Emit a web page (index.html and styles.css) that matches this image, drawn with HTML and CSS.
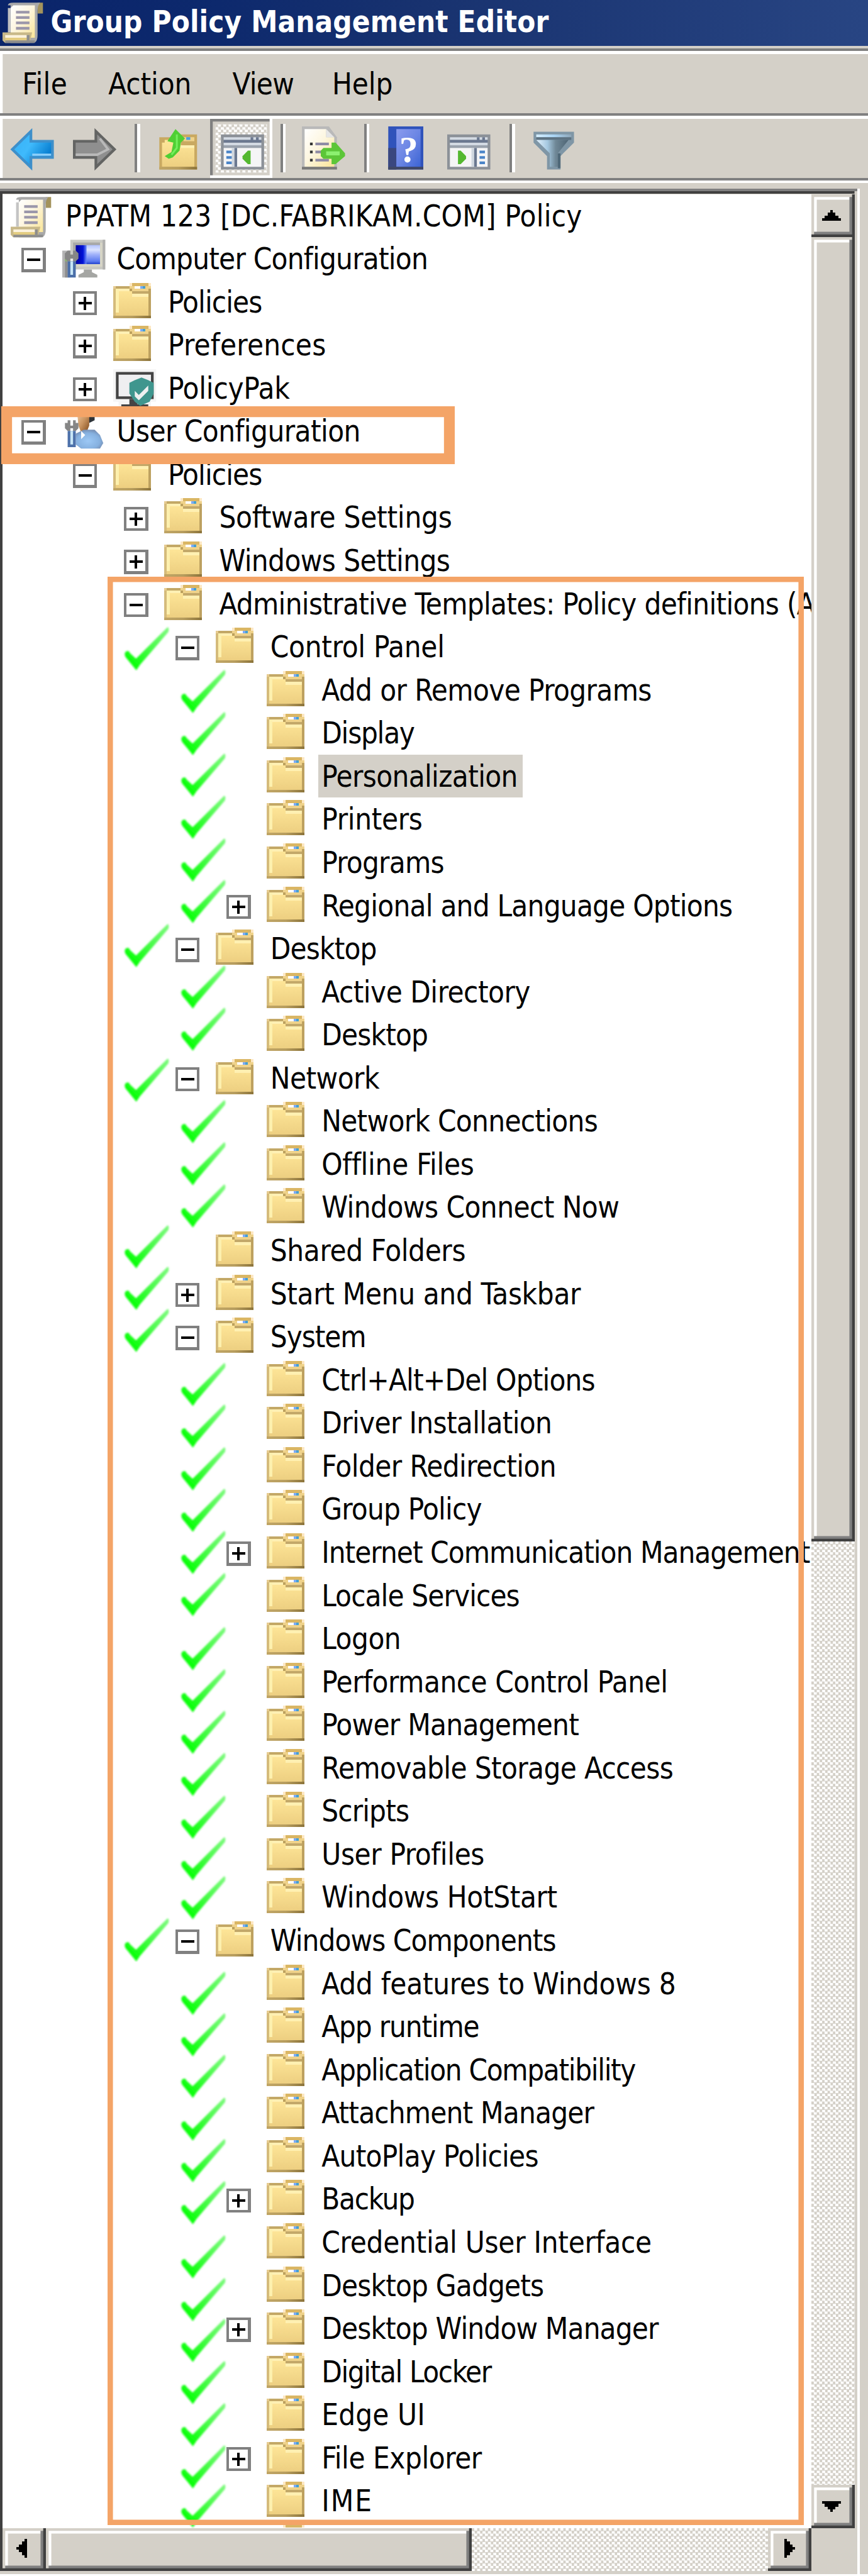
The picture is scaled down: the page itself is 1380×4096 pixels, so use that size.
FILE: index.html
```html
<!DOCTYPE html>
<html lang="en">
<head>
<meta charset="utf-8">
<title>Group Policy Management Editor</title>
<link rel="stylesheet" href="styles.css">
</head>
<body>
<svg class="defs" aria-hidden="true">
  <defs>
    <linearGradient id="g-folder" x1="0" y1="0" x2="0" y2="1"><stop offset="0" stop-color="#ffe799"/><stop offset="1" stop-color="#edcf81"/></linearGradient>
    <linearGradient id="g-foot" x1="0" y1="0" x2="1" y2="0"><stop offset="0" stop-color="#c0a565"/><stop offset=".5" stop-color="#b79d5e"/><stop offset="1" stop-color="#8b733a"/></linearGradient>
    <linearGradient id="g-paper" x1="0" y1="0" x2="1" y2="1"><stop offset="0" stop-color="#ffffff"/><stop offset=".45" stop-color="#fdf6e0"/><stop offset="1" stop-color="#fae596"/></linearGradient>
    <linearGradient id="g-blue" x1="0" y1="0" x2="1" y2=".6"><stop offset="0" stop-color="#37b0f5"/><stop offset=".5" stop-color="#3fbafc"/><stop offset="1" stop-color="#0077cc"/></linearGradient>
    <linearGradient id="g-screen" x1="0" y1="0" x2="1" y2="0"><stop offset="0" stop-color="#0000a0"/><stop offset=".3" stop-color="#0012d8"/><stop offset=".42" stop-color="#5a78f4"/><stop offset="1" stop-color="#7f9cf8"/></linearGradient>
    <linearGradient id="g-shade" x1="0" y1="0" x2="0" y2="1"><stop offset="0" stop-color="#b4c4ff"/><stop offset=".25" stop-color="#dbe3ff"/><stop offset=".5" stop-color="#9fb0fa"/><stop offset=".85" stop-color="#5b7af0"/><stop offset="1" stop-color="#2040cc"/></linearGradient>
    <linearGradient id="g-help" x1="0" y1="0" x2="1" y2="1"><stop offset="0" stop-color="#8a9bee"/><stop offset=".5" stop-color="#6c86e4"/><stop offset="1" stop-color="#3c64d4"/></linearGradient>
    <linearGradient id="g-cone" x1="0" y1="0" x2="1" y2="0"><stop offset="0" stop-color="#e2f1fc"/><stop offset=".35" stop-color="#a5c8e0"/><stop offset=".6" stop-color="#6f8796"/><stop offset="1" stop-color="#4d6474"/></linearGradient>
    <linearGradient id="g-rim" x1="0" y1="0" x2="1" y2="0"><stop offset="0" stop-color="#d5eefe"/><stop offset=".5" stop-color="#abd5f5"/><stop offset="1" stop-color="#8ea6b8"/></linearGradient>
    <linearGradient id="g-check" x1="1" y1="0" x2="0" y2="1"><stop offset="0" stop-color="#80fa80"/><stop offset=".45" stop-color="#48fb48"/><stop offset=".8" stop-color="#10ff10"/></linearGradient>
    <linearGradient id="g-face" x1="0" y1="0" x2="1" y2="1"><stop offset="0" stop-color="#efc79d"/><stop offset=".5" stop-color="#c8935f"/><stop offset="1" stop-color="#7f4a1b"/></linearGradient>
    <radialGradient id="g-body" cx=".45" cy=".6" r=".6"><stop offset="0" stop-color="#9cc8f5"/><stop offset=".7" stop-color="#86b1e0"/><stop offset="1" stop-color="#7790b5"/></radialGradient>
    <filter id="soft" x="-20%" y="-20%" width="140%" height="140%"><feGaussianBlur stdDeviation=".38"/></filter>
  </defs>

  <symbol id="folder" viewBox="0 0 16 16">
    <g shape-rendering="crispEdges">
      <rect x="0" y="2" width="14" height="12" fill="#e6cb90"/>
      <rect x="1" y="2" width="5" height="1" fill="#c3a866"/>
      <rect x="0" y="3" width="1" height="10" fill="#d5bb7b"/>
      <rect x="1" y="3" width="12" height="10" fill="url(#g-folder)"/>
      <rect x="1" y="3" width="5" height="1" fill="#fff0b4"/><rect x="1" y="3" width="1" height="9" fill="#fdf0ae"/>
      <rect x="6" y="1" width="8" height="3" fill="#efd28a"/>
      <rect x="7" y="1" width="6" height="1" fill="#dab664"/><rect x="6" y="1" width="1" height="1" fill="#fde8c4"/><rect x="13" y="1" width="1" height="1" fill="#fde8c4"/>
      <rect x="8" y="2" width="2" height="1" fill="#fff"/><rect x="10" y="2" width="1" height="1" fill="#7aabff"/><rect x="11" y="2" width="1" height="1" fill="#46a0cf"/>
      <rect x="6" y="3" width="1" height="1" fill="#bda15e"/><rect x="7" y="4" width="6" height="1" fill="#c3a869"/><rect x="7" y="5" width="6" height="1" fill="#fff0b2"/>
      <rect x="13" y="3" width="1" height="10" fill="#bda160"/>
      <rect x="0" y="13" width="14" height="1" fill="url(#g-foot)"/>
    </g>
  </symbol>

  <symbol id="scroll" viewBox="0 0 16 16">
    <path d="M13 1h2v4h-2z" fill="#a3935c"/>
    <path d="M2 2Q2 1 4 1h10q-1 1-1 3v9q0 3-2 3H3V2z" fill="#a9a9a9"/>
    <path d="M3 3l1-1h8v12H3z" fill="url(#g-paper)"/>
    <path d="M2 3h1v9H2z" fill="#c4c4c4"/>
    <path d="M5 4h5v1H5zM5 6h5v1H5zM5 8h5v1H5zM5 10h5v1H5z" fill="#9b97aa"/>
    <path d="M0 12h11l-1 4H1l-1-1z" fill="#c8b888"/>
    <path d="M1 13h8v1H1z" fill="#fbf2dc"/><path d="M1 14h8v1H1z" fill="#e3cc80"/>
    <path d="M1 15h11v1H1z" fill="#8d8d8d"/><path d="M9 13h1v2H9z" fill="#8d8d8d"/>
  </symbol>

  <symbol id="computer" viewBox="0 0 16 16">
    <rect x="3" y="1" width="13" height="11" fill="#c9c9c3"/>
    <rect x="4" y="2" width="11" height="9" fill="#a9a9a7"/><path d="M14 2h1v9H5v-1h9z" fill="#d6d5c6"/>
    <rect x="5" y="3" width="9" height="7" fill="url(#g-screen)"/><rect x="9" y="3" width="5" height="7" fill="url(#g-shade)"/>
    <path d="M15 1h1v11h-1z" fill="#b0b0ae"/>
    <path d="M8 12h3v1l2 1v1H6v-1l2-1z" fill="#a5a6a3"/>
    <path d="M0 5h3v10H0z" fill="#b4b4b4"/><path d="M1 6h1v9H1z" fill="#8e8e8e"/><path d="M1 8h1v1H1z" fill="#8db870"/>
    <path d="M2 5h1v1.500h1V5h1l1 1v2L5 9H2L1 8V6z" fill="#868686"/><path d="M3 8h1v1H3z" fill="#eee"/>
    <path d="M2 9h3v6H2z" fill="#4a6ea8"/><path d="M3 9h1v5H3z" fill="#c8e6f6"/>
  </symbol>

  <symbol id="policypak" viewBox="0 0 16 16">
    <path d="M0 1h16v12h-2v3H2v-3H0z" fill="#f5f5f5"/>
    <path d="M1 2h14v10H1z" fill="#444"/><path d="M2 3h12v8H2z" fill="#efeff1"/>
    <path d="M6 12h3v2h4v1H3v-1h3z" fill="#444"/>
    <path d="M6 6l2-1 2.500-1L13 5l2 1v4l-1.500 3-3.500 1.500L8 13 6 10z" fill="#3f968e"/>
    <path d="M8 9l1.500 1.500L13 7v2l-3.500 3.500L8 11z" fill="#eef0f0"/>
  </symbol>

  <symbol id="user" viewBox="0 0 16 16">
    <path d="M9 1h3v3l-2 1z" fill="#2e3338"/>
    <path d="M5.500 1H10v5L9 8.500H7L6 6z" fill="url(#g-face)"/>
    <path d="M5 9l3-1.500 4 0 2 2 1.200 3L14 14.500H7L5 13z" fill="url(#g-body)"/><path d="M7 8l1.500 1.500L7 11z" fill="#fff"/>
    <path d="M2 4h1v2h1V4h1v1h1v2L5 8H2L1 7V5h1z" fill="#868686"/><path d="M3 7h1v1H3z" fill="#fff"/>
    <path d="M2 8h3v6H2z" fill="#4d71aa"/><path d="M3 8h1v5H3z" fill="#c8e6f6"/>
  </symbol>

  <symbol id="check" viewBox="0 0 19 17">
    <path d="M1.300 9.700Q2.400 8.800 3 10.200L5.200 12.200 16.900.5Q17.600.6 17.200 2.300L6.600 14.600 5.300 16.500 1.300 11.600Q.7 10.500 1.300 9.700z" fill="url(#g-check)" filter="url(#soft)"/>
  </symbol>
</svg>

<div class="window">
  <header class="title-bar">
    <svg class="icon"><use href="#scroll"/></svg>
    <h1 class="title fit" data-width="183.800">Group Policy Management Editor</h1>
  </header>
  <div class="strip"></div>
  <div class="rule"></div>
  <nav class="menu">
    <span class="menu-item fit" data-width="15.800">File</span>
    <span class="menu-item fit" data-width="29.800">Action</span>
    <span class="menu-item fit" data-width="21.800">View</span>
    <span class="menu-item fit" data-width="21.500">Help</span>
  </nav>
  <div class="rule"></div>
  <div class="toolbar">
    <div class="tool"><svg class="icon" viewBox="0 0 16 16"><path d="M.6 8.500L7.500 1.800V5.500H15.500V11.500H7.500V15.200z" fill="url(#g-blue)" stroke="#3e8fca"/><path d="M8 10.500h7" stroke="#8fd0fb" stroke-width=".8"/></svg></div>
    <div class="tool"><svg class="icon" viewBox="0 0 16 16"><path d="M15.400 8.500L8.500 1.800V5.500H.5V11.500H8.500V15.200z" fill="#8f8f8f" stroke="#636463"/><path d="M1 10.500h8l4-2-3-4" fill="none" stroke="#b9b9b9" stroke-width=".9"/></svg></div>
    <div class="separator"></div>
    <div class="tool"><svg class="icon" viewBox="0 0 16 16"><path d="M1 4h8V3h6v13H1z" fill="#c9a961"/><path d="M2 6h1V5h6v2h5v8H2z" fill="url(#g-folder)"/><path d="M10 4h4v1.500h-4z" fill="#efd28a"/><path d="M11 4h1.500v1H11z" fill="#4d9fe0"/><path d="M9 7h5v1H9z" fill="#fff0b2"/><path d="M1 15h14v1H1z" fill="url(#g-foot)"/><path d="M7 1L10.500 4.500 9 6 8.500 9 6 11.500 4.500 12 3 11 5.500 9.500 6.200 6 4 5.500z" fill="#4fcf34"/><path d="M7.500 3v5L5.500 10.500" fill="none" stroke="#74ee5c" stroke-width=".7"/></svg></div>
    <div class="tool pressed"><svg class="icon" viewBox="-1 0 16 16"><path d="M0 3h16v13H0z" fill="#8c9198"/><path d="M1 4h14v1H1zM1 6h14v1H1z" fill="#d3dae3"/><path d="M1 5h14v1H1zM11 4h1v1h-1zM13 4h1v1h-1z" fill="#6b7890"/><path d="M1 7h14v1H1z" fill="#9aa2ad"/><path d="M1 8h14v7H1z" fill="#f5f5f6"/><path d="M4 8h1v7H4z" fill="#d0d7df"/><path d="M5 8h1v7H5z" fill="#6b7890"/><path d="M2 9h2v1H2zM2 11h2v1H2zM2 13h2v1H2z" fill="#4a84c8"/><path d="M11 9v5h-1l-2-2v-1l2-2z" fill="#54b830"/></svg></div>
    <div class="separator"></div>
    <div class="tool"><svg class="icon" viewBox="0 0 16 16"><path d="M0 0h10l3 4v12H0z" fill="#b9b9b9"/><path d="M1 1h8v3h3v11H1z" fill="url(#g-paper)"/><path d="M9 1l3 3H9z" fill="#e6e6e6"/><path d="M0 15h13v1H0z" fill="#7a7a78"/><path d="M3 6h1v1H3zM3 9h1v1H3zM3 12h1v1H3z" fill="#333"/><path d="M5 6h5v1H5zM5 9h3v1H5zM5 12h5v1H5z" fill="#8f8ba5"/><path d="M7 9l1-1h3V6h1.500L16 10v1l-3.500 3H11v-2H8l-1-1z" fill="#5cc638"/><path d="M9 10h5" stroke="#8cf070" stroke-width="1.500"/></svg></div>
    <div class="separator"></div>
    <div class="tool"><svg class="icon" viewBox="0 0 16 16"><path d="M1 0h13v16H1z" fill="#3053bb"/><path d="M1 8h3v8H1z" fill="#3a477f"/><path d="M4 1h9v14H4z" fill="url(#g-help)"/><path d="M1 15h13v1H1z" fill="#404865"/><text class="help-mark" x="8.600" y="13.200">?</text></svg></div>
    <div class="tool"><svg class="icon" viewBox="0 0 16 16"><path d="M0 3h16v13H0z" fill="#8c9198"/><path d="M1 4h14v1H1zM1 6h14v1H1z" fill="#d3dae3"/><path d="M1 5h14v1H1zM11 4h1v1h-1zM13 4h1v1h-1z" fill="#6b7890"/><path d="M1 7h14v1H1z" fill="#9aa2ad"/><path d="M1 8h14v7H1z" fill="#f5f5f6"/><path d="M9 8h1v7H9z" fill="#d0d7df"/><path d="M10 8h1v7h-1z" fill="#6b7890"/><path d="M12 9h2v1h-2zM12 11h2v1h-2zM12 13h2v1h-2z" fill="#4a84c8"/><path d="M4 9v5h1l2-2v-1L5 9z" fill="#54b830"/></svg></div>
    <div class="separator"></div>
    <div class="tool"><svg class="icon" viewBox="0 0 16 16"><path d="M1 2h15v4l-4 4v0l-1 1v5H6v-5L1 6z" fill="#7f96a6"/><path d="M2 3h13v1H2z" fill="url(#g-rim)"/><path d="M2 4h13v1H2z" fill="#5d7282"/><path d="M2 5h12l-4 5v5H7v-5z" fill="url(#g-cone)"/><path d="M10.500 10v5.500" stroke="#4f6878"/></svg></div>
  </div>
  <div class="rule"></div>
  <div class="strip strip-tall"></div>

  <main class="panes">
    <section class="tree-pane">
      <div class="tree" id="tree"></div>
      <div class="scroll-y">
        <div class="bevel end"><svg class="arrow-v" viewBox="0 0 7 4"><path d="M3 0h1v1h1v1h1v1h1v1H0V3h1V2h1V1h1z"/></svg></div>
        <div class="bevel thumb-y"></div>
        <div class="track"></div>
        <div class="bevel end"><svg class="arrow-v" viewBox="0 0 7 4"><path d="M0 0h7v1H6v1H5v1H4v1H3V3H2V2H1V1H0z"/></svg></div>
      </div>
      <div class="scroll-x">
        <div class="bevel end"><svg class="arrow-h" viewBox="0 0 4 7"><path d="M4 0v7H3V6H2V5H1V4H0V3h1V2h1V1h1V0z"/></svg></div>
        <div class="bevel thumb-x"></div>
        <div class="track"></div>
        <div class="bevel end"><svg class="arrow-h" viewBox="0 0 4 7"><path d="M0 0h1v1h1v1h1v1h1v1H3v1H2v1H1v1H0z"/></svg></div>
      </div>
      <div class="callout callout-user"></div>
      <div class="callout callout-templates"></div>
    </section>
    <div class="splitter"></div>
  </main>
  <div class="base-line"></div>
</div>
<script src="tree.js"></script>
</body>
</html>
```
FILE: styles.css
```css
:root {
  --u: 4.2857px; /* one interface pixel */
  --face: #d4d0c8;
  --shadow: #808080;
  --dark: #404040;
  --callout: #f4a467;
}

* { box-sizing: border-box; }

html, body {
  margin: 0;
  height: 4096px;
  overflow: hidden;
  background: var(--face);
}

body {
  font-family: "DejaVu Sans Condensed", "DejaVu Sans", sans-serif;
  font-stretch: condensed;
  font-size: calc(11 * var(--u));
  color: #000;
}

.defs { position: absolute; width: 0; height: 0; }

.window {
  display: flex;
  flex-direction: column;
  width: calc(322 * var(--u));
}

.icon {
  display: block;
  flex: none;
  width: calc(16 * var(--u));
  height: calc(16 * var(--u));
  overflow: visible;
}

.title-bar {
  display: flex;
  height: calc(17 * var(--u));
  padding-left: var(--u);
  gap: calc(1.800 * var(--u));
  background: linear-gradient(90deg, #0a246a 0, #0d296d 25%, #18326f 49%, #284583 100%);
}

.title {
  margin: 0;
  font-size: calc(11 * var(--u));
  font-weight: bold;
  line-height: calc(16.300 * var(--u));
  white-space: pre;
  color: #fff;
}

.strip { height: var(--u); }
.strip-tall { height: calc(2 * var(--u)); }

.rule {
  height: calc(2 * var(--u));
  background: linear-gradient(var(--shadow) 50%, #fff 0);
}

.menu {
  display: grid;
  grid-template-columns: calc(32 * var(--u)) calc(46 * var(--u)) calc(37 * var(--u)) auto;
  height: calc(22 * var(--u));
  padding-left: calc(8.200 * var(--u));
  box-shadow: inset var(--u) 0 #fff;
}

.menu-item {
  justify-self: start;
  line-height: calc(22.200 * var(--u));
  white-space: pre;
}

.toolbar {
  display: flex;
  height: calc(22 * var(--u));
  padding-left: var(--u);
  box-shadow: inset var(--u) 0 #fff;
}

.tool {
  width: calc(23 * var(--u));
  height: calc(22 * var(--u));
  padding: calc(3 * var(--u));
}

.pressed {
  background:
    repeating-conic-gradient(#fff 0 25%, var(--face) 0 50%)
    calc(2 * var(--u)) calc(2 * var(--u)) / calc(2 * var(--u)) calc(2 * var(--u));
  box-shadow:
    inset calc(-1 * var(--u)) calc(-1 * var(--u)) #fff,
    inset var(--u) var(--u) var(--shadow),
    inset 0 0 0 calc(2 * var(--u)) var(--face);
}

.separator {
  width: calc(8 * var(--u));
  height: calc(18 * var(--u));
  margin-top: calc(2 * var(--u));
  padding: 0 calc(3 * var(--u));
  background: linear-gradient(90deg, var(--shadow) 50%, #fff 0) content-box;
}

.help-mark {
  font: bold 14px "Liberation Serif", serif;
  text-anchor: middle;
  fill: #fff;
}

.panes {
  display: grid;
  grid-template-columns: calc(318 * var(--u)) var(--u) auto;
  height: calc(885 * var(--u));
}

.splitter { background: #fff; }
.base-line { height: var(--u); background: #fff; }

.tree-pane {
  position: relative;
  display: grid;
  grid-template-columns: calc(300 * var(--u)) calc(16 * var(--u));
  grid-template-rows: calc(866 * var(--u)) calc(16 * var(--u));
  padding: calc(2 * var(--u)) var(--u) var(--u);
  background:
    linear-gradient(var(--shadow), var(--shadow)) 0 0 / 100% var(--u) no-repeat,
    linear-gradient(var(--dark), var(--dark)) 0 var(--u) / calc(317 * var(--u)) var(--u) no-repeat,
    linear-gradient(var(--dark), var(--dark)) 0 var(--u) / var(--u) calc(883 * var(--u)) no-repeat,
    var(--face);
}

.tree {
  background: #fff;
  overflow-x: clip;
  overflow-y: visible;
}

.row {
  position: relative;
  display: flex;
  height: calc(16 * var(--u));
  padding-left: calc((19 * var(--depth) + 3) * var(--u));
}

.row-cut { height: calc(2 * var(--u)); overflow: hidden; }

.expander {
  flex: none;
  width: calc(9 * var(--u));
  height: calc(9 * var(--u));
  margin: calc(4 * var(--u)) calc(6 * var(--u)) 0 calc(-15 * var(--u));
}

.label {
  flex: none;
  height: calc(16 * var(--u));
  margin-left: calc(3 * var(--u));
  padding-left: calc(1.300 * var(--u));
  line-height: calc(16.200 * var(--u));
  white-space: pre;
}

.selected .label {
  width: calc(76 * var(--u));
  background: var(--face);
}

.check {
  position: absolute;
  width: calc(19 * var(--u));
  height: calc(17 * var(--u));
}

.check-4 { left: calc(44.200 * var(--u)); }
.check-5 { left: calc(65.200 * var(--u)); }

.scroll-y { display: flex; flex-direction: column; }

.scroll-x {
  display: flex;
  width: calc(300 * var(--u));
}

.track {
  flex: 1;
  background: repeating-conic-gradient(#fff 0 25%, var(--face) 0 50%) 0 0 / calc(2 * var(--u)) calc(2 * var(--u));
}

.bevel {
  flex: none;
  background: var(--face);
  box-shadow:
    inset calc(-1 * var(--u)) calc(-1 * var(--u)) var(--dark),
    inset var(--u) var(--u) var(--face),
    inset calc(-2 * var(--u)) calc(-2 * var(--u)) var(--shadow),
    inset calc(2 * var(--u)) calc(2 * var(--u)) #fff;
}

.end { width: calc(16 * var(--u)); height: calc(16 * var(--u)); }
.thumb-y { height: calc(484 * var(--u)); }
.thumb-x { width: calc(158 * var(--u)); }

.arrow-v, .arrow-h { display: block; shape-rendering: crispEdges; }

.end { padding: calc(6 * var(--u)) 0 0 calc(4 * var(--u)); }
.scroll-x .end { padding: calc(4 * var(--u)) 0 0 calc(5 * var(--u)); }
.scroll-x .end:last-child { padding-left: calc(6 * var(--u)); }

.arrow-v {
  width: calc(7 * var(--u));
  height: calc(4 * var(--u));
}

.arrow-h {
  width: calc(4 * var(--u));
  height: calc(7 * var(--u));
}

/* Highlight frames laid over the tree */
.callout { position: absolute; }

.callout-user {
  left: calc(.5 * var(--u));
  top: calc(80.800 * var(--u));
  width: calc(168.100 * var(--u));
  height: calc(21.500 * var(--u));
  box-shadow: inset 0 0 0 calc(4 * var(--u)) var(--callout);
}

.callout-templates {
  left: calc(40 * var(--u));
  top: calc(144 * var(--u));
  width: calc(258.200 * var(--u));
  height: calc(722.800 * var(--u));
  box-shadow: inset 0 0 0 calc(2 * var(--u)) var(--callout);
}
```
FILE: tree.js
```js
// [depth, expander, icon, label, label width, bottom of the check mark]
const rows = [
  [0, "", "scroll", "PPATM 123 [DC.FABRIKAM.COM] Policy", 191.3],
  [1, "-", "computer", "Computer Configuration", 115],
  [2, "+", "folder", "Policies", 34.5],
  [2, "+", "folder", "Preferences", 58.3],
  [2, "+", "policypak", "PolicyPak", 44.8],
  [1, "-", "user", "User Configuration", 90],
  [2, "-", "folder", "Policies", 34.5],
  [3, "+", "folder", "Software Settings", 86],
  [3, "+", "folder", "Windows Settings", 85.2],
  [3, "-", "folder", "Administrative Templates: Policy definitions (A", 220.5],
  [4, "-", "folder", "Control Panel", 64.2, 248.7],
  [5, "", "folder", "Add or Remove Programs", 122, 264.5],
  [5, "", "folder", "Display", 34, 280.1],
  [5, "", "folder", "Personalization", 72.3, 295.6, "selected"],
  [5, "", "folder", "Printers", 37, 311.2],
  [5, "", "folder", "Programs", 45, 327],
  [5, "+", "folder", "Regional and Language Options", 152, 342.5],
  [4, "-", "folder", "Desktop", 39, 358.8],
  [5, "", "folder", "Active Directory", 77, 374.3],
  [5, "", "folder", "Desktop", 39, 389.9],
  [4, "-", "folder", "Network", 40, 408.8],
  [5, "", "folder", "Network Connections", 102, 424.3],
  [5, "", "folder", "Offline Files", 56, 439.9],
  [5, "", "folder", "Windows Connect Now", 110, 455.4],
  [4, "", "folder", "Shared Folders", 72, 470.7],
  [4, "+", "folder", "Start Menu and Taskbar", 114.7, 486],
  [4, "-", "folder", "System", 35, 501.6],
  [5, "", "folder", "Ctrl+Alt+Del Options", 101, 521.7],
  [5, "", "folder", "Driver Installation", 85, 537.2],
  [5, "", "folder", "Folder Redirection", 86.6, 553],
  [5, "", "folder", "Group Policy", 59, 568.3],
  [5, "+", "folder", "Internet Communication Management", 180.7, 584.1],
  [5, "", "folder", "Locale Services", 73, 599.7],
  [5, "", "folder", "Logon", 29, 619.8],
  [5, "", "folder", "Performance Control Panel", 128, 635.4],
  [5, "", "folder", "Power Management", 95, 650.9],
  [5, "", "folder", "Removable Storage Access", 130, 666.5],
  [5, "", "folder", "Scripts", 32, 682.3],
  [5, "", "folder", "User Profiles", 60, 697.8],
  [5, "", "folder", "Windows HotStart", 87, 712.2],
  [4, "-", "folder", "Windows Components", 105.5, 727.7],
  [5, "", "folder", "Add features to Windows 8", 131, 747.6],
  [5, "", "folder", "App runtime", 58, 763.1],
  [5, "", "folder", "Application Compatibility", 116, 778.4],
  [5, "", "folder", "Attachment Manager", 100.6, 794.2],
  [5, "", "folder", "AutoPlay Policies", 80, 809.7],
  [5, "+", "folder", "Backup", 34, 825.3],
  [5, "", "folder", "Credential User Interface", 122, 845.4],
  [5, "", "folder", "Desktop Gadgets", 82, 861.2],
  [5, "+", "folder", "Desktop Window Manager", 124.5, 876.5],
  [5, "", "folder", "Digital Locker", 62.5, 892],
  [5, "", "folder", "Edge UI", 38, 907.8],
  [5, "+", "folder", "File Explorer", 59, 923.3],
  [5, "", "folder", "IME", 18.7, 937.9],
];

const expander = (sign) => `<svg class="expander" viewBox="0 0 9 9" shape-rendering="crispEdges">
  <path d="M0 0h9v9H0z" fill="#808080"/><path d="M1 1h7v7H1z" fill="#fff"/>
  <path d="M2 4h5v1H2z"/>${sign === "+" ? '<path d="M4 2h1v5H4z"/>' : ""}</svg>`;

document.getElementById("tree").innerHTML = rows.map(
  ([depth, sign, icon, label, width, check, state = ""], i) => {
    const offset = check ? (check - 16.5 - 72 - 16 * i).toFixed(1) : 0;
    return `<div class="row ${state}" style="--depth:${depth}">
      ${sign ? expander(sign) : ""}<svg class="icon"><use href="#${icon}"/></svg>
      <span class="label fit" data-width="${width - 0.6}">${label}</span>
      ${check ? `<svg class="check check-${depth}" style="top:calc(${offset} * var(--u))"><use href="#check"/></svg>` : ""}
    </div>`;
  }
).join("") + `<div class="row row-cut" style="--depth:5"><svg class="icon"><use href="#folder"/></svg></div>`;

// Track each text so that it spans its width in interface pixels.
const unit = 4.2857;
document.querySelectorAll(".fit").forEach((el) => {
  const range = document.createRange();
  range.selectNodeContents(el);
  const natural = range.getBoundingClientRect().width;
  const target = (Number(el.dataset.width) + 1) * unit;
  el.style.letterSpacing = ((target - natural) / el.textContent.length).toFixed(3) + "px";
});
```
